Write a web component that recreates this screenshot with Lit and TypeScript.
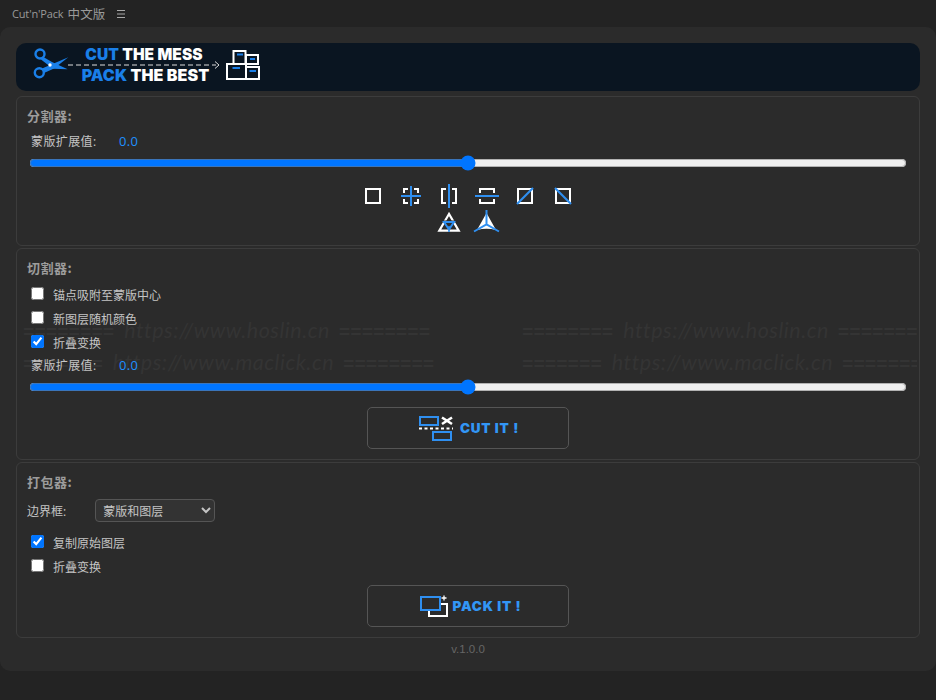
import { LitElement, html, css } from "lit";
import { customElement } from "lit/decorators.js";

@customElement("app-root")
export class AppRoot extends LitElement {
  static styles = css`
    :host { display: block; height: 700px; background: #232323; overflow: hidden; font-family: "Open Sans", "Noto Sans CJK SC", sans-serif; font-size: 12px; color: #c4c4c4; }
    * { box-sizing: border-box; }
    .titlebar { height: 27px; display: flex; align-items: center; padding-left: 12px; color: #9a9a9a; font-size: 11px; letter-spacing: -0.15px; }
    .titlebar .cn { font-family: "Noto Sans CJK SC", sans-serif; font-size: 12.500px; letter-spacing: 0.2px; margin-left: 4px; }
    .menu { margin-left: 11px; display: flex; }
    .panel { position: relative; height: 644px; background: #2b2b2b; border-radius: 10px; padding: 16px 16px 0; }
    .banner { height: 48px; background: #0a1521; border-radius: 10px; display: flex; align-items: center; padding-left: 17px; margin-bottom: 5px; }
    .banner .sc { margin-bottom: 6px; }
    .slogan { position: relative; width: 152px; margin-left: -1px; display: flex; flex-direction: column; align-items: center; gap: 4px; font-family: Inter, sans-serif; font-weight: 900; font-size: 15.500px; letter-spacing: 0.1px; line-height: 16px; color: #fff; margin-top: -4px; }
    .slogan b { font-weight: 900; color: #1a7fe8; }
    .slogan svg { position: absolute; left: 0; top: 14px; }
    .slogan .l2 { font-size: 16px; margin-left: 3px; }
    .boxes { margin-left: 5px; margin-bottom: 4px; }
    .section { position: relative; z-index: 1; border: 1px solid #3c3c3c; border-radius: 6px; padding: 0 10px 10px; margin-bottom: 2px; }
    h3 { margin: 9px 0 0; height: 20px; line-height: 20px; font-size: 13px; letter-spacing: 0.5px; font-weight: 700; color: #9c9c9c; font-family: "Noto Sans CJK SC", sans-serif; }
    .mask { display: flex; height: 20px; align-items: center; padding-left: 4px; letter-spacing: 0.4px; }
    .mask.first { margin-top: 5px; }
    .mask.second { margin-top: 1px; }
    .mask .val { position: absolute; left: 102px; color: #1e90ff; font-size: 13px; letter-spacing: 0.3px; }
    input[type="range"] { display: block; width: 878px; height: 16px; margin: 4px 2px 0; accent-color: #0075ff; }
    .icons { display: flex; flex-wrap: wrap; justify-content: center; width: 228px; margin: 12px auto 0; }
    .icons span { width: 38px; height: 26px; display: flex; align-items: center; justify-content: center; }
    .icons svg { overflow: visible; }
    .checks { margin-top: 4px; }
    .checks.pack { margin-top: 8px; }
    label.check { display: flex; align-items: center; gap: 9px; height: 24px; padding-left: 4px; }
    label.check input { margin: 0 0 1px; width: 13px; height: 13px; }
    label.check span { margin-top: 1px; }
    .action { display: flex; align-items: center; justify-content: center; width: 202px; height: 42px; margin: 12px auto 0; border: 1px solid #555; border-radius: 5px; font-family: Inter, sans-serif; font-weight: 900; font-size: 13.500px; color: #3296f5; gap: 6px; padding-left: 1px; letter-spacing: 0.8px; }
    .action.pack { margin-top: 7px; gap: 4px; padding-left: 4px; }
    .boxrow { display: flex; align-items: center; margin-top: 7px; height: 23px; }
    select { width: 120px; height: 23px; margin-left: 29px; background: #333; color: #c4c4c4; border: 1px solid #555; border-radius: 4px; font: 12px "Noto Sans CJK SC", sans-serif; padding-left: 3px; }
    .version { text-align: center; margin-top: 2px; height: 18px; line-height: 18px; color: #666; font-family: "Liberation Sans", sans-serif; font-size: 11.500px; }
    .wm { position: absolute; left: 23px; top: 0; width: 894px; height: 60px; margin-top: 287px; overflow: hidden; color: #343434; pointer-events: none; white-space: nowrap; }
    .wm div { display: grid; grid-template-columns: 499px 400px; height: 32px; align-items: center; }
    .wm i { font-family: Lato, sans-serif; font-size: 21.500px; letter-spacing: 0.5px; padding: 0 9px 0 10px; }
    .wm u { text-decoration: none; font-family: "Liberation Mono", monospace; font-weight: 700; font-size: 19px; }
  `;

  private wmCell(left: string, site: string) {
    return html`<span><u>${left}</u><i>${site}</i><u>========</u></span>`;
  }

  render() {
    const b = "#2f8ff0";
    return html`
      <div class="titlebar">
        <span>Cut'n'Pack</span><span class="cn">中文版</span>
        <span class="menu"><svg width="8" height="8" viewBox="0 0 8 8"><path d="M0 .5H8M0 4H8M0 7.500H8" stroke="#a8a8a8" stroke-width="1"/></svg></span>
      </div>
      <div class="panel">
        <div class="wm">
          <div>${this.wmCell("========", "https://www.hoslin.cn")}${this.wmCell("========", "https://www.hoslin.cn")}</div>
          <div>${this.wmCell("=======", "https://www.maclick.cn")}${this.wmCell("=======", "https://www.maclick.cn")}</div>
        </div>
        <div class="banner">
          <svg class="sc" width="36" height="34" viewBox="0 0 36 34">
            <g fill="none" stroke="#1a7fe8" stroke-width="2.400"><circle cx="7" cy="7" r="4.500"/><circle cx="6.300" cy="25.700" r="4.500"/></g>
            <path d="M9.500 9.500 19 15 34.700 22.300 20 21.800 8 12.500Z" fill="#1a7fe8"/>
            <path d="M9 21.500 35.300 10.300 21 21.500 11 26Z" fill="#1a7fe8"/>
            <circle cx="17" cy="18" r="1.700" fill="#fff"/>
          </svg>
          <div class="slogan">
            <svg width="152" height="8" viewBox="0 0 152 8"><path d="M0 4H148" stroke="#ddd" stroke-width="1" stroke-dasharray="5 3"/><path d="M147 .5 151 4 147 7.500" fill="none" stroke="#ddd" stroke-width="1"/></svg>
            <span><b>CUT</b> THE MESS</span>
            <span class="l2"><b>PACK</b> THE BEST</span>
          </div>
          <svg class="boxes" width="36" height="32" viewBox="0 0 36 32">
            <g fill="none" stroke="#fff" stroke-width="2"><rect x="8.500" y="2" width="12" height="13"/><rect x="21" y="6" width="12" height="9"/><rect x="2" y="15" width="19" height="15"/><rect x="21" y="18" width="13" height="12"/></g>
            <path d="M12 5.500H18M25 10H30M7.500 19H15M24.500 22H31" stroke="#1a7fe8" stroke-width="1.800"/>
          </svg>
        </div>

        <div class="section">
          <h3>分割器:</h3>
          <div class="mask first"><span>蒙版扩展值:</span><span class="val">0.0</span></div>
          <input type="range" min="-1" max="1" step="0.1" .value=${"0"} />
          <div class="icons">
            <span><svg width="24" height="24" viewBox="0 0 24 24"><rect x="5" y="5" width="14" height="14" fill="none" stroke="#fff" stroke-width="2"/></svg></span>
            <span><svg width="24" height="24" viewBox="0 0 24 24"><path d="M9 5H5V9M15 5H19V9M9 19H5V15M15 19H19V15" fill="none" stroke="#fff" stroke-width="2"/><path d="M12 2V22M2 12H22" stroke="${b}" stroke-width="2"/></svg></span>
            <span><svg width="24" height="24" viewBox="0 0 24 24"><path d="M9 5H5V19H9M15 5H19V19H15" fill="none" stroke="#fff" stroke-width="2"/><path d="M12 0V24" stroke="${b}" stroke-width="2"/></svg></span>
            <span><svg width="24" height="24" viewBox="0 0 24 24"><path d="M5 9V5H19V9M5 15V19H19V15" fill="none" stroke="#fff" stroke-width="2"/><path d="M0 12H24" stroke="${b}" stroke-width="2"/></svg></span>
            <span><svg width="24" height="24" viewBox="0 0 24 24"><rect x="5" y="5" width="14" height="14" fill="none" stroke="#fff" stroke-width="2"/><path d="M4 20 20 4" stroke="${b}" stroke-width="2.200"/></svg></span>
            <span><svg width="24" height="24" viewBox="0 0 24 24"><rect x="5" y="5" width="14" height="14" fill="none" stroke="#fff" stroke-width="2"/><path d="M4 4 20 20" stroke="${b}" stroke-width="2.200"/></svg></span>
            <span><svg width="24" height="24" viewBox="0 0 24 24"><path d="M12 4 2.300 20.700H21.700Z" fill="none" stroke="#fff" stroke-width="2.200"/><path d="M5.500 10.500H18.500L12 20Z" fill="#2b2b2b"/><path d="M7 12H17L12 19.500Z" fill="none" stroke="${b}" stroke-width="2"/><path d="M12 16V22" stroke="${b}" stroke-width="1.500"/></svg></span>
            <span><svg width="24" height="24" viewBox="0 0 24 24"><path d="M11.500 3 2 20Q11.500 17.500 21 20Z" fill="#fff"/><path d="M11.500 0V14.300M11.500 14.300-1 21.500M11.500 14.300 24 21.500" fill="none" stroke="${b}" stroke-width="2"/></svg></span>
          </div>
        </div>

        <div class="section">
          <h3>切割器:</h3>
          <div class="checks">
            <label class="check"><input type="checkbox" /><span>锚点吸附至蒙版中心</span></label>
            <label class="check"><input type="checkbox" /><span>新图层随机颜色</span></label>
            <label class="check"><input type="checkbox" checked /><span>折叠变换</span></label>
          </div>
          <div class="mask second"><span>蒙版扩展值:</span><span class="val">0.0</span></div>
          <input type="range" min="-1" max="1" step="0.1" .value=${"0"} />
          <div class="action">
            <svg width="36" height="28" viewBox="0 0 36 28">
              <g fill="none" stroke="${b}" stroke-width="2"><rect x="2" y="3" width="18" height="8"/><rect x="15" y="18" width="18" height="8"/></g>
              <path d="M1 14.500H35" stroke="#fff" stroke-width="2" stroke-dasharray="3 2.500"/>
              <path d="M24 3.500 34 10M24 10 34 3.500" stroke="#fff" stroke-width="2.600"/>
            </svg>
            <span>CUT IT !</span>
          </div>
        </div>

        <div class="section">
          <h3>打包器:</h3>
          <div class="boxrow"><span>边界框:</span>
            <select><option>蒙版和图层</option><option>蒙版</option><option>图层</option></select>
          </div>
          <div class="checks pack">
            <label class="check"><input type="checkbox" checked /><span>复制原始图层</span></label>
            <label class="check"><input type="checkbox" /><span>折叠变换</span></label>
          </div>
          <div class="action pack">
            <svg width="30" height="22" viewBox="0 0 30 22">
              <rect x="2" y="2" width="19" height="13" fill="none" stroke="${b}" stroke-width="2"/>
              <path d="M10 16V21H28V9H22" fill="none" stroke="#fff" stroke-width="2"/>
              <path d="M25 .5V5.500M22.500 3H27.500" stroke="#fff" stroke-width="1.300"/>
            </svg>
            <span>PACK IT !</span>
          </div>
        </div>
        <div class="version">v.1.0.0</div>
      </div>
    `;
  }
}
